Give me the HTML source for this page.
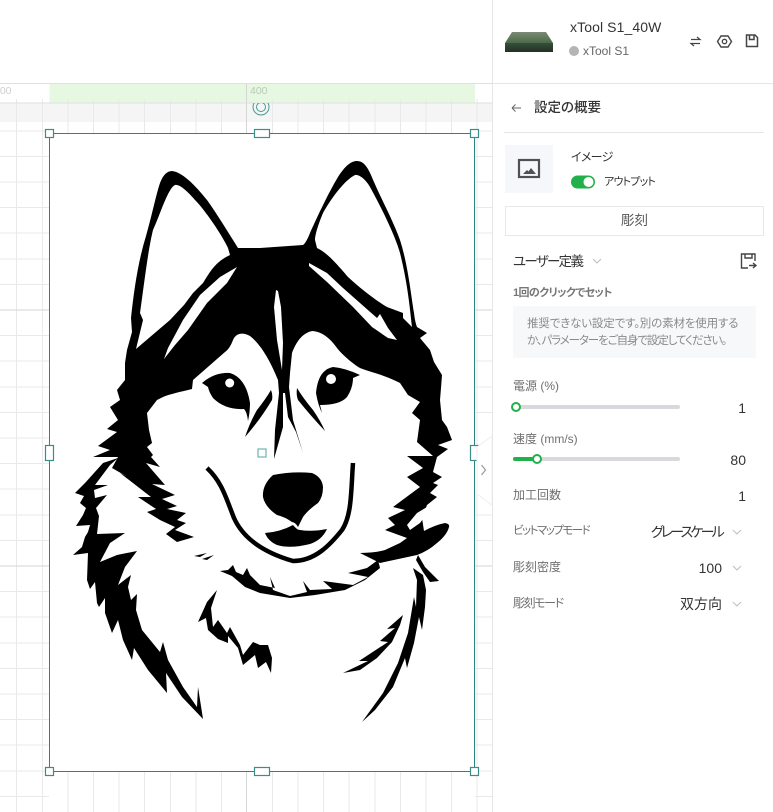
<!DOCTYPE html>
<html lang="ja"><head><meta charset="utf-8"><title>xTool</title>
<style>
html,body{margin:0;padding:0;width:773px;height:812px;overflow:hidden;background:#fff}
body{position:relative;font-family:"Liberation Sans","Noto Sans CJK JP",sans-serif;color:#333}
svg.main{position:absolute;left:0;top:0}
.t{position:absolute;line-height:20px;height:20px;white-space:nowrap;font-feature-settings:"palt" 1}
.r{text-align:right}
.l{font-size:12px;color:#6f6f6f}
.v{font-size:14px;color:#333}
</style></head><body>
<svg class="main" width="773" height="812" viewBox="0 0 773 812" xmlns="http://www.w3.org/2000/svg">
<defs>
<clipPath id="c"><rect x="240" y="103" width="40" height="20"/></clipPath>
<linearGradient id="mt" x1="0" y1="0" x2="0" y2="1"><stop offset="0" stop-color="#7b8a74"/><stop offset="1" stop-color="#4a6b47"/></linearGradient>
<linearGradient id="mf" x1="0" y1="0" x2="0" y2="1"><stop offset="0" stop-color="#34503a"/><stop offset="1" stop-color="#262e26"/></linearGradient>
</defs>
<rect width="773" height="812" fill="#fff"/>
<rect x="0" y="103" width="492" height="19" fill="#f5f5f5"/>
<rect x="49.500" y="84" width="425.500" height="19" fill="#e6f8e1"/>
<g stroke="#e9e9e9" stroke-width="1">
<path d="M16.500 99V812M42.500 99V812M68 99V134M93.500 99V134M119 99V134M144.500 99V134M170.500 99V134M196 99V134M221.500 99V134M272.500 99V134M298 99V134M323.500 99V134M349 99V134M375 99V134M400.500 99V134M426 99V134M451.500 99V134M477 99V812"/>
<path d="M68 771V812M93.500 771V812M119 771V812M144.500 771V812M170.500 771V812M196 771V812M221.500 771V812M272.500 771V812M298 771V812M323.500 771V812M349 771V812M375 771V812M400.500 771V812M426 771V812M451.500 771V812"/>
<path d="M0 131H49M0 156.500H49M0 182H49M0 207.500H49M0 233H49M0 259H49M0 284.500H49M0 335.500H49M0 361H49M0 387H49M0 412.500H49M0 438H49M0 463.500H49M0 489H49M0 515H49M0 540.500H49M0 591.500H49M0 617H49M0 643H49M0 668.500H49M0 694H49M0 719.500H49M0 745H49M0 771H49M0 796.500H49"/>
<path d="M475 131H492M475 156.500H492M475 182H492M475 207.500H492M475 233H492M475 259H492M475 284.500H492M475 335.500H492M475 361H492M475 387H492M475 412.500H492M475 515H492M475 540.500H492M475 591.500H492M475 617H492M475 643H492M475 668.500H492M475 694H492M475 719.500H492M475 745H492M475 771H492M475 796.500H492"/>
</g>
<path d="M0 310H49M475 310H492M0 566H49M475 566H492M246.500 84V134M246.500 771V812" stroke="#d5d5d5" fill="none"/>
<path d="M0 83.500H492M0 103H492" stroke="#dfdfdf"/>
<text x="-6" y="94" font-size="10.500" fill="#cfcfcf" font-family="Liberation Sans">100</text>
<text x="250" y="94" font-size="10.500" fill="#bccab8" font-family="Liberation Sans">400</text>
<g fill="none" stroke="#4a9a96" stroke-width="1" clip-path="url(#c)">
<circle cx="261" cy="107" r="8"/><circle cx="261" cy="107" r="4.500"/>
</g>
<rect x="49.500" y="134" width="425" height="637" fill="#fff"/>
<!-- DOG -->
<g fill="#000">
<path d="M127 350L132 332L131 318C134 290 138 262 146 236C152 215 156 195 160 183C163 175 167 171 172 171C182 172 195 185 207 200C217 214 228 232 238 248L260 248L303 245Q306 243 310 233C318 215 330 190 338 177C345 166 351 161 357 161C363 161 367 166 371 175C380 197 392 218 400 240C408 265 411 295 414 313Q415 322 417 327L427 333L420 338L430 350L434 362L442 375L441 388L440 400L442 420L447 427L452 440L438 445L448 449L437 457L433 472L442 477L433 483L438 485L430 493L437 497L427 505L422 518L424 531Q435 525 445 523Q450 524 449 527Q447 535 437 543Q428 551 417 555L380 563L360 553Q375 553 385 550L400 543L407 538L385 530L395 525L388 518L405 510L393 507L420 487L407 477L423 468L407 456L433 456L417 442L420 420L412 413L420 402L408 395L400 383C385 375 370 372 360 368C350 362 340 352 337 348C330 338 322 332 313 331C303 332 296 342 292 353L290 373L289 387L293 420L303 453L296 432L288 417L285 393L283 393L283 427L274 459L275 430L279 393L278 380C272 365 262 345 250 336C243 332 236 333 233 340C231 345 229 349 225 352L193 380L192 389C180 392 170 394 163 397L157 400L147 413L149 430L152 443L147 447L153 455L151 457L160 467L146 463L165 485L152 484L175 495L162 499L177 506L167 509L186 513L177 520L186 523L175 530L194 537L177 542L166 534L175 527L160 520L147 512L156 509L138 497L151 497L120 473L126 476L112 468L118 457L93 457L110 450L98 446L117 432L107 429L118 420L110 407L120 400L117 390L125 380L125 363Z"/>
<path d="M118 458L103 463L85 483L75 493L84 496L80 503L86 508L83 515L76 526L90 525L88 532L85 537L82 547L73 555L88 553L87 580L90 589L95 582L97 603L99 607L105 598L105 613L112 633L118 620L123 640L132 660L134 648L148 670L167 693L166 673L182 697L203 719L198 687L197 707L183 687L168 660L163 642L160 652L142 630L136 610L137 594L131 600L128 587L131 575L118 585L125 567L137 551L117 555L100 562L110 543L125 533L97 534L99 516L96 508L107 495L95 498L94 490L108 485L95 485L110 465Z"/>
<path d="M217 590L211 608L213 627L218 620L227 633L230 627L240 645L243 655L253 642L260 645L268 645L272 658L271 673L266 662L258 668L255 655L243 665L238 648L228 636L228 643L218 639L208 630L206 618L198 622L207 602Z"/>
<path d="M378 560L367 568L348 573L368 577L353 585L323 581L332 589L310 590L303 581L307 592L290 596L273 590L270 577L275 588L260 585L250 575L247 568L243 575L236 572L233 565L228 570L220 571L232 576L245 587L260 593L290 598L315 595L345 590L365 580L380 568Z"/>
<path d="M418 555L425 567L439 581L430 582L423 572L416 560Z"/>
<path d="M413 568L423 575L426 590L425 607L422 630L419 617L414 643L407 668L405 658L393 687L375 710L362 722L383 693L398 663L408 633L414 597L416 607L417 580Z"/>
<path d="M403 615L387 629L395 628L380 641L388 642L359 661L368 661L343 673L360 670L377 658L392 642L400 625Z"/>
<path d="M194 556L207 553L200 557ZM202 559L214 555L207 560Z"/>
<path d="M202 383Q215 372 230 373Q246 378 250 403Q250 412 248 421Q247 412 244 409Q225 410 213 398Q209 392 208 387Z"/>
<path d="M271 390Q273 395 272 400Q260 420 245 437Q250 422 257 410Q265 400 271 390Z"/>
<path d="M360 375Q345 368 333 367Q318 370 316 393Q318 405 322 413L320 405Q340 405 347 397Q353 388 353 378Z"/>
<path d="M297 388Q296 395 298 400Q310 415 325 431Q320 420 313 410Q303 398 297 388Z"/>
<path d="M273 475Q293 471 312 473Q322 477 323 487Q323 497 318 503Q308 510 303 517L298 527Q295 522 292 522Q285 517 277 515Q265 507 263 497Q262 485 273 475Z"/>
<path d="M265 533Q280 532 293 525Q297 530 300 530Q312 532 327 529Q322 540 310 544Q290 549 277 545Q268 541 265 533Z"/>
</g>
<path d="M207 468C222 482 226 498 234 518C243 538 262 552 293 561C315 561 330 545 342 530C352 515 351 490 353 463" fill="none" stroke="#000" stroke-width="4.500"/>
<g fill="#fff">
<path d="M175 185C168 188 160 215 153 230C148 250 144 285 140 313L143 320L136 349L170 320L184 305L193 293L203 283C210 272 215 262 230 255L228 248C222 235 205 210 195 200C188 192 180 184 175 185Z"/>
<path d="M355 175C345 180 332 197 323 213C318 225 315 235 315 240L317 248C325 252 332 258 348 277C360 288 375 300 387 307L403 313L403 318L412 327C410 310 408 285 400 253C395 235 380 205 370 187C365 178 358 174 355 175Z"/>
<path d="M237 267L220 277L200 295L183 320L168 348L164 359L175 345L188 330L207 303L227 283Z"/>
<path d="M309 263L327 273L343 288L360 303L377 318L380 314L388 328L397 340L388 338L372 327L353 307L327 282L309 266Z"/>
<path d="M276 290L274 307L277 340L282 370L283 343L281 307L278 291Z"/>
<path d="M427 507L417 513L407 525L410 530L420 523L426 515Z"/>
<circle cx="229.700" cy="383" r="4.500"/><circle cx="331" cy="379" r="5"/>
</g>
<rect x="49.500" y="133.500" width="425" height="638" fill="none" stroke="#2a8582" stroke-width="1"/>
<g fill="#fff" stroke="#3a8d89" stroke-width="1.200">
<rect x="45.500" y="129.500" width="8" height="8"/><rect x="470.500" y="129.500" width="8" height="8"/>
<rect x="45.500" y="767.500" width="8" height="8"/><rect x="470.500" y="767.500" width="8" height="8"/>
<rect x="254.500" y="129.500" width="15" height="8"/><rect x="254.500" y="767.500" width="15" height="8"/>
<rect x="45.500" y="445.500" width="8" height="15"/><rect x="470.500" y="445.500" width="8" height="15"/>
<rect x="258" y="449" width="8" height="8" stroke="#6fb5b1"/>
</g>
<path d="M492 436L477 447V494L492 505Z" fill="#fff" stroke="#efefef"/>
<path d="M481.500 465L485.500 470L481.500 475" fill="none" stroke="#999" stroke-width="1.200"/>
<rect x="492" y="0" width="281" height="812" fill="#fff"/>
<path d="M492.500 0V812" stroke="#e6e6e6"/>
<path d="M492 83.500H773" stroke="#e6e6e6"/>
<path d="M504 132.500H764" stroke="#e6e6e6"/>
<path d="M512 32H546L553 43H505Z" fill="url(#mt)"/>
<path d="M505 43H553V52H505Z" fill="url(#mf)"/>
<circle cx="574" cy="51" r="5" fill="#b4b4b6"/>
<g fill="none" stroke="#444" stroke-width="1.200">
<path d="M691 39.500H700L697 37M700 43.500H691L694 46"/>
<path d="M717.500 41.500L721 36H728L731.500 41.500L728 47H721Z" stroke-width="1.400"/><circle cx="724.500" cy="41.500" r="2.200" stroke-width="1.300"/>
<path d="M746.500 35H755L757.500 37.500V46.500H746.500ZM749.500 35V39.500H754V35" stroke-width="1.500"/>
<path d="M512 108H521M512 108L515.500 104.500M512 108L515.500 111.500" stroke="#666" stroke-width="1"/>
</g>
<rect x="505" y="145" width="48" height="48" fill="#f5f7fa"/>
<rect x="519" y="160" width="20" height="17" fill="none" stroke="#4f4f55" stroke-width="2.200"/>
<path d="M523 174L527 170L528.500 171.500L531 168L536 174Z" fill="#4f4f55"/>
<rect x="571" y="175.500" width="24" height="13" rx="6.500" fill="#22b04b"/>
<circle cx="588.500" cy="182" r="5" fill="#fff"/>
<rect x="505.500" y="206.500" width="258" height="29" fill="#fff" stroke="#e8e8e8"/>
<g fill="none" stroke="#c0c0c0" stroke-width="1.100">
<path d="M593 259L597 263L601 259"/>
<path d="M733 530L737 534L741 530"/>
<path d="M733 566L737 570L741 566"/>
<path d="M733 602L737 606L741 602"/>
</g>
<path d="M755 261V254H741.500V268H748M745 254V258H752V254M749 265.500H756M753 263L756 265.500L753 268" fill="none" stroke="#444" stroke-width="1.400"/>
<rect x="513" y="306" width="243" height="52" fill="#f6f8fa"/>
<rect x="513" y="405" width="167" height="4" rx="2" fill="#d9d9dd"/>
<rect x="513" y="457" width="167" height="4" rx="2" fill="#d9d9dd"/>
<rect x="513" y="457" width="24" height="4" rx="2" fill="#22b04b"/>
<circle cx="516" cy="407" r="4" fill="#fff" stroke="#22b04b" stroke-width="2"/>
<circle cx="537" cy="459" r="4" fill="#fff" stroke="#22b04b" stroke-width="2"/>
</svg>

<div class="t" style="left:570px;top:17px;font-size:14px;color:#333;letter-spacing:.1px">xTool S1_40W</div>
<div class="t" style="left:583px;top:41px;font-size:12px;color:#666">xTool S1</div>
<div class="t" style="left:534px;top:98px;font-size:13.500px;color:#333;font-weight:500">設定の概要</div>
<div class="t" style="left:571px;top:147px;font-size:12px;color:#333;letter-spacing:-.7px">イメージ</div>
<div class="t" style="left:604px;top:172px;font-size:11px;color:#333;letter-spacing:-.8px">アウトプット</div>
<div class="t" style="left:505px;width:259px;text-align:center;top:211px;font-size:13.500px;color:#555">彫刻</div>
<div class="t" style="left:513px;top:252px;font-size:13.500px;color:#333;letter-spacing:-1.700px">ユーザー定義</div>
<div class="t" style="left:513px;top:283px;font-size:11px;color:#777;font-weight:bold;letter-spacing:-.6px">1回のクリックでセット</div>
<div class="t" style="left:527px;top:314px;font-size:11.500px;color:#8a8a8a;letter-spacing:-.15px">推奨できない設定です。別の素材を使用する</div>
<div class="t" style="left:527px;top:331px;font-size:11.500px;color:#8a8a8a;letter-spacing:-1.100px">か、パラメーターをご自身で設定してください。</div>
<div class="t l" style="left:513px;top:376px">電源 (%)</div>
<div class="t r v" style="left:700px;width:46px;top:398px">1</div>
<div class="t l" style="left:513px;top:429px">速度 (mm/s)</div>
<div class="t r v" style="left:700px;width:46px;top:450px">80</div>
<div class="t l" style="left:513px;top:485px">加工回数</div>
<div class="t r v" style="left:700px;width:46px;top:486px">1</div>
<div class="t l" style="left:513px;top:521px;font-size:11.500px;letter-spacing:-1.500px">ビットマップモード</div>
<div class="t r v" style="left:620px;width:102px;top:522px;letter-spacing:-2.800px">グレースケール</div>
<div class="t l" style="left:513px;top:557px">彫刻密度</div>
<div class="t r v" style="left:620px;width:102px;top:558px">100</div>
<div class="t l" style="left:513px;top:593px;letter-spacing:-1.400px">彫刻モード</div>
<div class="t r v" style="left:620px;width:102px;top:594px">双方向</div>
</body></html>
